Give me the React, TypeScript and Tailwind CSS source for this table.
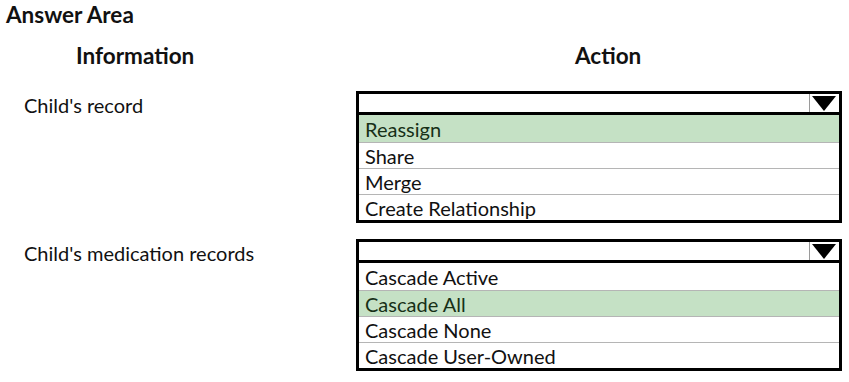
const sections = [
  {
    label: "Child's record",
    options: ["Reassign", "Share", "Merge", "Create Relationship"],
    picked: 0,
  },
  {
    label: "Child's medication records",
    options: ["Cascade Active", "Cascade All", "Cascade None", "Cascade User-Owned"],
    picked: 1,
  },
];

function Dropdown({ options, picked }: { options: string[]; picked: number }) {
  return (
    <div className="w-[486px]">
      <div className="flex h-[24px] items-center justify-end border-[3px] border-black bg-white pr-[3px]">
        <span className="h-[18px] w-px bg-[#9a9a9a]" />
        <svg width="24" height="15" viewBox="0 0 24 15" className="ml-[2px]">
          <polygon points="0,0 24,0 12,15" fill="#000" />
        </svg>
      </div>
      <div className="border-x-[3px] border-b-[3px] border-black bg-white">
        {options.map((o, i) => (
          <div
            key={o}
            className={`box-border flex items-center pl-[6px] text-[20px] ${
              i > 0 ? "h-[26px] border-t border-[#b5b5b5]" : "h-[27px]"
            } ${i === picked ? "bg-[#c5e1c5] text-[#173017]" : "text-[#111]"}`}
          >
            {o}
          </div>
        ))}
      </div>
    </div>
  );
}

export default function App() {
  return (
    <div
      className="h-[382px] w-[849px] bg-white text-[#111]"
      style={{ fontFamily: "Lato, 'Open Sans', sans-serif" }}
    >
      <h1 className="pl-[6px] pt-[1px] text-[22.5px] font-bold leading-[28px]">Answer Area</h1>
      <div className="mt-[13px] flex text-[22.5px] font-bold leading-[28px]">
        <div className="w-[356px] pl-[76px]">Information</div>
        <div className="pl-[219px]">Action</div>
      </div>
      <div className="mt-[21px] flex flex-col gap-[16px]">
        {sections.map((s) => (
          <div key={s.label} className="flex">
            <div className="w-[356px] pl-[24px] pt-[1px] text-[20px] leading-[26px]">{s.label}</div>
            <Dropdown options={s.options} picked={s.picked} />
          </div>
        ))}
      </div>
    </div>
  );
}
